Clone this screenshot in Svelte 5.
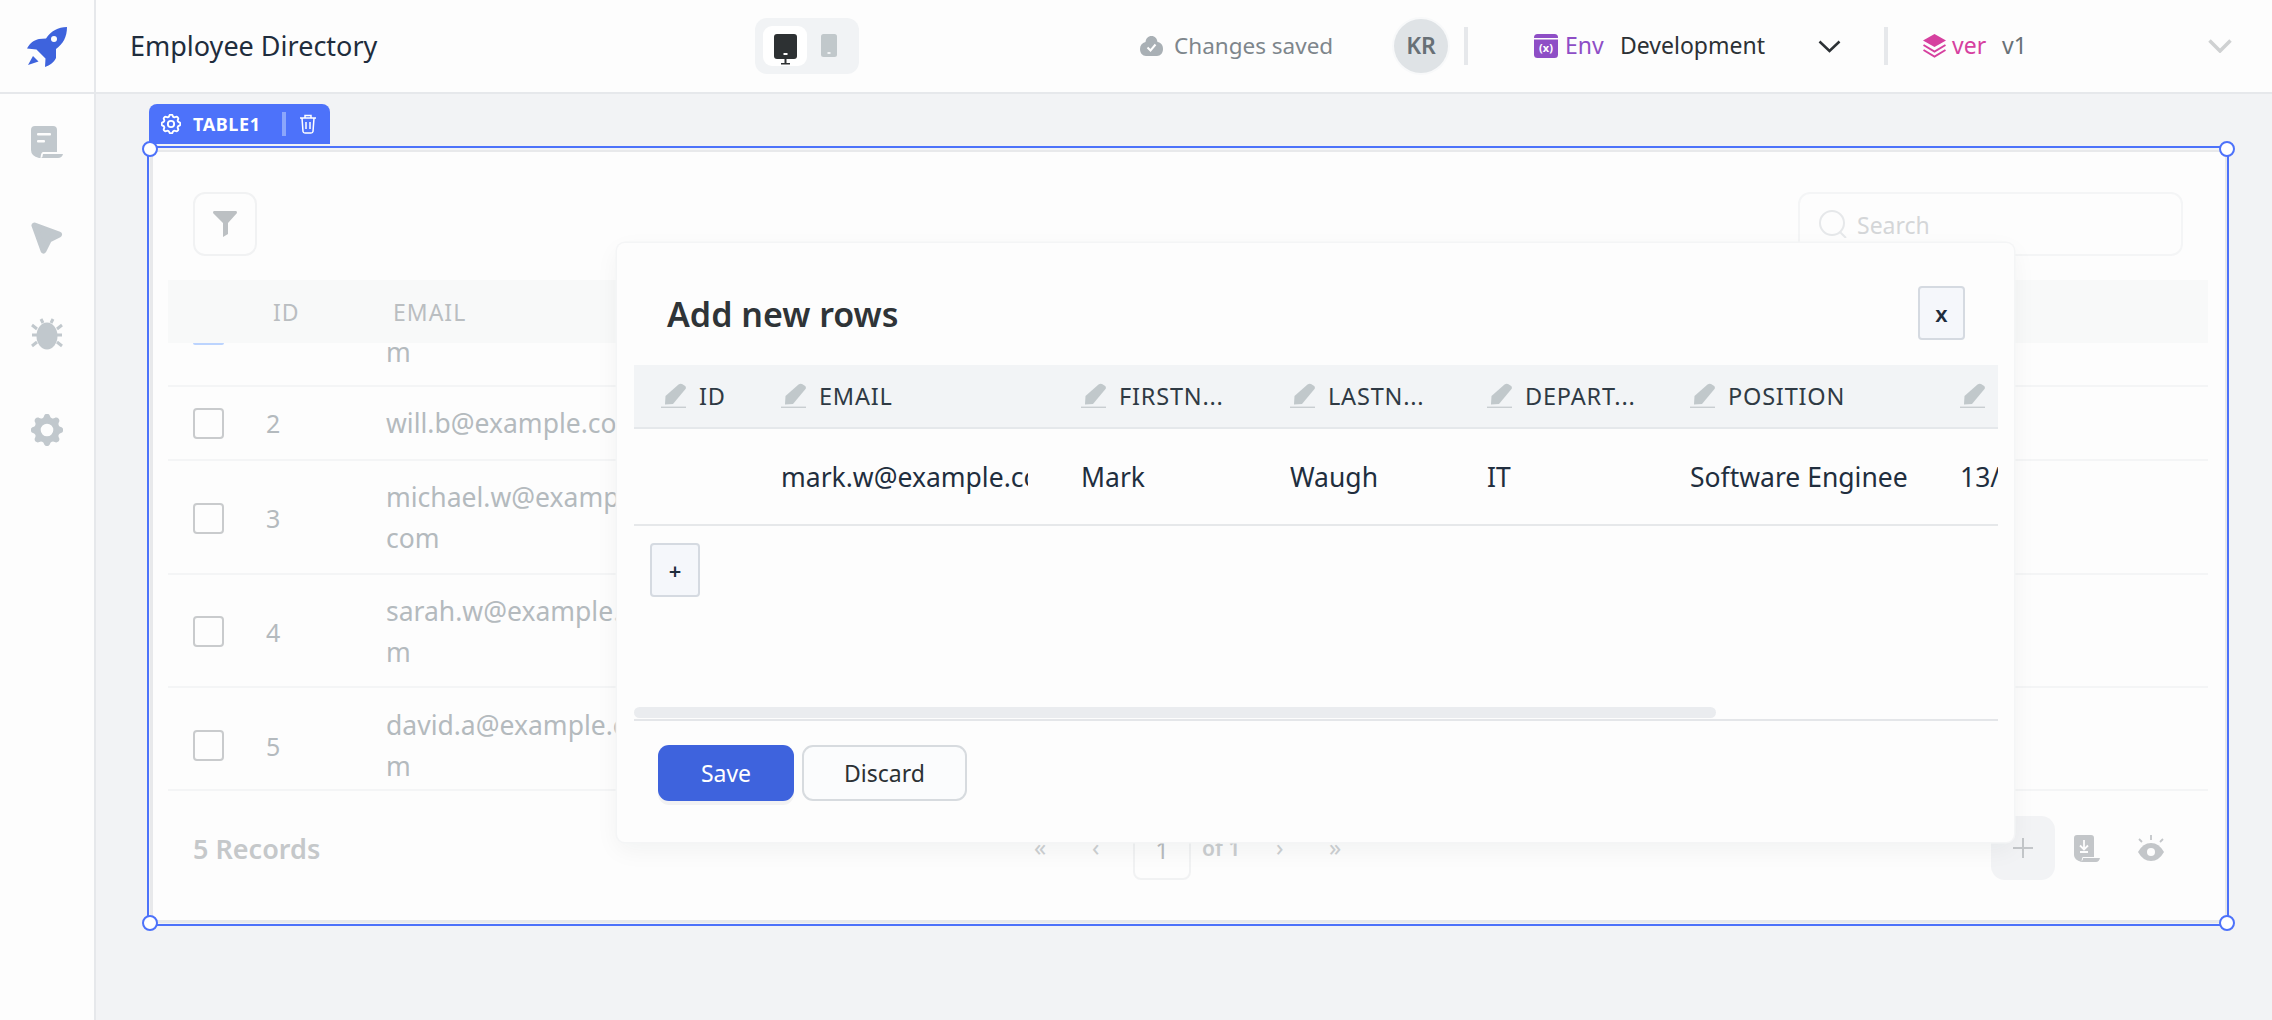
<script>
  const gear = "M10.325 4.317c.426-1.756 2.924-1.756 3.35 0a1.724 1.724 0 0 0 2.573 1.066c1.543-.94 3.31.826 2.37 2.37a1.724 1.724 0 0 0 1.065 2.572c1.756.426 1.756 2.924 0 3.35a1.724 1.724 0 0 0-1.066 2.573c.94 1.543-.826 3.31-2.37 2.37a1.724 1.724 0 0 0-2.572 1.065c-.426 1.756-2.924 1.756-3.35 0a1.724 1.724 0 0 0-2.573-1.066c-1.543.94-3.31-.826-2.37-2.37a1.724 1.724 0 0 0-1.065-2.572c-1.756-.426-1.756-2.924 0-3.35a1.724 1.724 0 0 0 1.066-2.573c-.94-1.543.826-3.31 2.37-2.37c1 .608 2.296.07 2.572-1.065z"

  const rows = [
    { id: '', email: 'm', h: 42, pad: 0, partial: true },
    { id: 2, email: 'will.b@example.com', h: 72, pad: 0 },
    { id: 3, email: 'michael.w@example.\ncom', h: 110, pad: 2 },
    { id: 4, email: 'sarah.w@example.co\nm', h: 109, pad: 2 },
    { id: 5, email: 'david.a@example.co\nm', h: 87, pad: 14 }
  ]

  const columns = [
    { name: 'ID', value: '', width: 120 },
    { name: 'EMAIL', value: 'mark.w@example.com', width: 300 },
    { name: 'FIRSTN...', value: 'Mark', width: 209 },
    { name: 'LASTN...', value: 'Waugh', width: 197 },
    { name: 'DEPART...', value: 'IT', width: 203 },
    { name: 'POSITION', value: 'Software Engineer', width: 270 },
    { name: '', value: '13/04/2023', width: 170 }
  ]
</script>

{#snippet pencil()}
  <svg class="pencil" viewBox="0 0 25 25" aria-hidden="true">
    <path d="M17.5 1.6q2-1.6 4-.4l2.3 1.6q1.8 1.3.7 3.2L12 21l-8 .5.5-8.5z" fill="#c1c8cb" />
    <rect x="0" y="23.6" width="25" height="1.6" fill="#c9ced1" />
  </svg>
{/snippet}

<div class="page">
  <header class="top">
    <div class="logo">
      <svg width="40" height="40" viewBox="27 27 40 40" aria-hidden="true">
        <path d="M67 27C58 27 51 31 46 38.500L39 39C34 40 30 43 27 48.500L36.500 49.500L45.500 58.500L45 67C50 65.500 54 62 56 58L56 49C63 44 67 37 67 27z" fill="#3e63dd" />
        <circle cx="54" cy="39" r="3" fill="#fdfdfd" />
        <path d="M28 65L33 56L38.500 61.500z" fill="#3e63dd" />
      </svg>
    </div>
    <div class="title">Employee Directory</div>
    <div class="devices">
      <div class="device active">
        <svg width="23" height="32" viewBox="0 0 23 32" aria-hidden="true">
          <rect x="0" y="0" width="23" height="25" rx="3" fill="#2d3133" />
          <rect x="9.500" y="19" width="4" height="2" fill="#fff" />
          <rect x="10.500" y="25" width="2" height="5" fill="#2d3133" />
          <rect x="7" y="29" width="9" height="1.500" fill="#2d3133" />
        </svg>
      </div>
      <div class="device">
        <svg width="16" height="24" viewBox="0 0 16 24" aria-hidden="true">
          <rect width="16" height="23" rx="2.500" fill="#c1c8cb" />
          <rect x="6.500" y="18" width="3" height="2" fill="#f1f3f5" />
        </svg>
      </div>
    </div>
    <div class="saved">
      <svg width="23" height="20" viewBox="0 0 23 20" aria-hidden="true">
        <path d="M11.500 0C15 0 17 2.500 17.500 6C21 6.500 23 9 23 13C23 17 20.500 20 17 20H6C2.500 20 0 17 0 13C0 9.500 2 7 5.500 6C6 2.500 8 0 11.500 0z" fill="#a9b0b5" />
        <path d="M7.500 11.500L10.500 14.500L15.500 8.500" fill="none" stroke="#fff" stroke-width="2" />
      </svg>
      <span>Changes saved</span>
    </div>
    <div class="avatar">KR</div>
    <div class="sep first"></div>
    <svg class="env-icon" width="24" height="24" viewBox="0 0 24 24" aria-hidden="true">
      <rect width="24" height="24" rx="3.500" fill="#8e4ec6" />
      <rect y="4" width="24" height="1.500" fill="#fdfdfd" />
      <text x="12" y="18" text-anchor="middle" font-size="11" font-weight="700" font-family="Noto Sans, sans-serif" fill="#fff">(x)</text>
    </svg>
    <span class="env">Env</span>
    <span class="env-value">Development</span>
    <svg class="chev" width="23" height="13" viewBox="0 0 23 13" aria-hidden="true">
      <path d="M1.500 1.500L11.500 11L21.500 1.500" fill="none" stroke="#2c3135" stroke-width="2.500" />
    </svg>
    <div class="sep second"></div>
    <svg class="ver-icon" width="23" height="24" viewBox="0 0 23 24" aria-hidden="true">
      <path d="M11.500 0L23 6.500L11.500 13L0 6.500z" fill="#d6409f" />
      <path d="M0.500 11L11.500 17.500L22.500 11M0.500 16L11.500 22.500L22.500 16" fill="none" stroke="#d6409f" stroke-width="2" />
    </svg>
    <span class="ver">ver</span>
    <span class="ver-value">v1</span>
    <svg class="chev-muted" width="24" height="14" viewBox="0 0 24 14" aria-hidden="true">
      <path d="M1.500 1.500L12 12L22.500 1.500" fill="none" stroke="#cfd1d2" stroke-width="3.500" />
    </svg>
  </header>

  <div class="body">
    <nav class="side">
      <svg width="32" height="32" viewBox="0 0 32 32" aria-hidden="true">
        <path d="M4 0H22Q26 0 26 4V26H12Q10 26 9.500 32H8Q0 30 0 24V4Q0 0 4 0z" fill="#c1c8cd" />
        <path d="M12 28H32Q31 32 27 32H10Q12 31 12 28z" fill="#c1c8cd" />
        <rect x="6" y="7" width="14" height="2.500" rx="1" fill="#fdfdfd" />
        <rect x="6" y="14" width="8" height="2.500" rx="1" fill="#fdfdfd" />
      </svg>
      <svg width="32" height="32" viewBox="0 0 32 32" aria-hidden="true">
        <path d="M3.500 3.500L28 12.500L18 17.500L12.500 28.500z" fill="#c1c8cd" stroke="#c1c8cd" stroke-width="6" stroke-linejoin="round" />
      </svg>
      <svg width="32" height="32" viewBox="0 0 32 32" aria-hidden="true">
        <ellipse cx="16" cy="18" rx="10.500" ry="13.500" fill="#c1c8cd" />
        <path d="M10 1L12 5M22 1L20 5M1 7L6 11M31 7L26 11M1 17H6M31 17H26M1 28L6 24M31 28L26 24" stroke="#c1c8cd" stroke-width="3" />
      </svg>
      <svg width="32" height="32" viewBox="2.500 2.500 19 19" aria-hidden="true">
        <path d={gear + "M12 8.500a3.500 3.500 0 1 0 0 7a3.500 3.500 0 0 0 0-7z"} fill="#c1c8cd" fill-rule="evenodd" transform="translate(12 12) scale(1.070) translate(-12 -12)" />
      </svg>
    </nav>

    <main class="canvas">
      <div class="tab">
        <svg width="20" height="20" viewBox="2.500 2.500 19 19" aria-hidden="true">
          <path d={gear} fill="none" stroke="#fff" stroke-width="1.800" />
          <circle cx="12" cy="12" r="3" fill="none" stroke="#fff" stroke-width="1.800" />
        </svg>
        <span class="tab-name">TABLE1</span>
        <span class="tab-sep"></span>
        <svg width="18" height="20" viewBox="0 0 18 20" aria-hidden="true">
          <path d="M1 4H17M3 4L4 17.500Q4.200 19 6 19H12Q13.800 19 14 17.500L15 4M6 4V1.500H12V4M7 8V15M11 8V15" fill="none" stroke="#fff" stroke-width="1.500" />
        </svg>
      </div>

      <div class="widget">
        <span class="handle h-tl"></span>
        <span class="handle h-tr"></span>
        <span class="handle h-bl"></span>
        <span class="handle h-br"></span>
        <div class="card">
          <div class="toolbar">
            <div class="filter">
              <svg width="24" height="26" viewBox="0 0 24 26" aria-hidden="true">
                <path d="M1 0H23Q24 0 24 2L15 12V23L10 26V12L0 2Q0 0 1 0z" fill="#bcc0c3" />
              </svg>
            </div>
            <div class="search">
              <svg width="28" height="28" viewBox="0 0 28 28" aria-hidden="true">
                <circle cx="13" cy="13" r="12" fill="none" stroke="#e6e8ea" stroke-width="2" />
                <path d="M21 22L27 28" stroke="#e6e8ea" stroke-width="2" />
              </svg>
              <span>Search</span>
            </div>
          </div>

          <div class="table">
            <div class="thead">
              <span class="th-id">ID</span>
              <span class="th-email">EMAIL</span>
            </div>
            {#each rows as r}
              <div class="row" style="height: {r.h}px; padding-top: {r.pad}px">
                {#if r.partial}
                  <span class="sliver"></span>
                  <span class="email partial">{r.email}</span>
                {:else}
                  <span class="check"></span>
                  <span class="num">{r.id}</span>
                  <span class="email">{r.email}</span>
                {/if}
              </div>
            {/each}
          </div>

          <div class="foot">
            <span class="records">5 Records</span>
            <div class="pager">
              <span class="pg first-pg">«</span>
              <span class="pg prev-pg">‹</span>
              <span class="pg-box">1</span>
              <span class="pg-of">of 1</span>
              <span class="pg next-pg">›</span>
              <span class="pg last-pg">»</span>
            </div>
            <div class="add">
              <svg width="20" height="20" viewBox="0 0 20 20" aria-hidden="true">
                <path d="M10 0V20M0 10H20" stroke="#c3c6c9" stroke-width="2" />
              </svg>
            </div>
            <svg class="dl" width="26" height="27" viewBox="0 0 26 27" aria-hidden="true">
              <path d="M3 0H17Q20 0 20 3V22H9Q8 22 7.500 27Q0 25 0 20V3Q0 0 3 0z" fill="#c3c6c9" />
              <path d="M9 23H26Q25 27 22 27H6Q9 26 9 23z" fill="#c3c6c9" />
              <path d="M10 5V14M6 10.500L10 14.500L14 10.500M6 17H14" fill="none" stroke="#fdfdfd" stroke-width="1.800" />
            </svg>
            <svg class="eye" width="26" height="26" viewBox="0 0 26 26" aria-hidden="true">
              <path d="M0 17Q5 8 13 8Q21 8 26 17Q21 26 13 26Q5 26 0 17z" fill="#c3c6c9" />
              <circle cx="13" cy="17" r="4" fill="#fdfdfd" />
              <path d="M13 0V5M1 4L4 7M25 4L22 7" stroke="#c3c6c9" stroke-width="1.800" />
            </svg>
          </div>
        </div>
      </div>

      <section class="modal">
        <div class="modal-head">
          <h2>Add new rows</h2>
          <button class="close">x</button>
        </div>
        <div class="sheet">
          <div class="sheet-row sheet-head">
            {#each columns as c}
              <div class="cell" style="width: {c.width}px">
                {@render pencil()}
                {#if c.name}<span>{c.name}</span>{/if}
              </div>
            {/each}
          </div>
          <div class="sheet-row sheet-body">
            {#each columns as c}
              <div class="cell" style="width: {c.width}px"><span class="clip">{c.value}</span></div>
            {/each}
          </div>
          <button class="plus">+</button>
          <div class="scroll"><div class="thumb"></div></div>
        </div>
        <div class="modal-foot">
          <button class="save">Save</button>
          <button class="discard">Discard</button>
        </div>
      </section>
    </main>
  </div>
</div>

<style>
  :global(body) {
    margin: 0;
    background: #f2f3f5;
    font-family: "Noto Sans", sans-serif;
  }

  .page {
    width: 2272px;
    height: 1020px;
    overflow: hidden;
  }

  /* top bar */
  .top {
    display: flex;
    align-items: center;
    height: 94px;
    box-sizing: border-box;
    background: #fdfdfd;
    border-bottom: 2px solid #e6e8eb;
  }
  .logo {
    width: 96px;
    height: 92px;
    box-sizing: border-box;
    border-right: 2px solid #e6e8eb;
    padding: 27px 0 0 27px;
    flex-shrink: 0;
  }
  .title {
    width: 625px;
    margin: -2px 0 0 34px;
    font-size: 27px;
    color: #1f2d3d;
    white-space: nowrap;
  }
  .devices {
    display: flex;
    align-items: center;
    width: 104px;
    height: 56px;
    box-sizing: border-box;
    padding-left: 8px;
    background: #f1f3f5;
    border-radius: 12px;
  }
  .device {
    display: flex;
    align-items: center;
    justify-content: center;
    width: 32px;
    height: 40px;
    margin-right: 6px;
    border-radius: 9px;
  }
  .device.active {
    width: 44px;
    background: #fff;
  }
  .device.active svg { margin-top: 8px; }
  .saved {
    display: flex;
    align-items: center;
    gap: 11px;
    width: 254px;
    margin-left: 281px;
    font-size: 22.500px;
    color: #7e868c;
    white-space: nowrap;
  }
  .saved span,
  .env,
  .env-value,
  .ver,
  .ver-value {
    margin-top: -2px;
  }
  .avatar {
    width: 54px;
    height: 54px;
    line-height: 52px;
    text-align: center;
    border-radius: 50%;
    background: #dfe3e6;
    color: #687076;
    font-size: 23px;
    font-weight: 600;
    box-shadow: 0 0 0 2px #f8f9fa;
  }
  .sep {
    width: 4px;
    height: 38px;
    background: #e6e8eb;
  }
  .sep.first { margin: 0 66px 0 16px; }
  .sep.second { margin: 0 35px 0 43px; }
  .env-icon { flex-shrink: 0; }
  .env {
    width: 55px;
    margin-left: 7px;
    font-size: 23px;
    color: #8e4ec6;
  }
  .env-value {
    width: 198px;
    font-size: 23px;
    color: #2c3135;
  }
  .ver-icon { flex-shrink: 0; }
  .ver {
    width: 50px;
    margin-left: 6px;
    font-size: 23px;
    color: #d6409f;
  }
  .ver-value {
    width: 206px;
    font-size: 23px;
    color: #687076;
  }

  /* body */
  .body {
    display: flex;
    height: 926px;
  }
  .side {
    display: flex;
    flex-direction: column;
    gap: 64px;
    width: 96px;
    box-sizing: border-box;
    padding: 32px 0 0 31px;
    background: #fdfdfd;
    border-right: 2px solid #e6e8eb;
    flex-shrink: 0;
  }
  .canvas {
    position: relative;
    flex: 1;
    background: #f2f3f5;
  }

  /* selected widget on the canvas */
  .tab {
    position: absolute;
    left: 53px;
    top: 10px;
    display: flex;
    align-items: center;
    width: 181px;
    height: 40px;
    box-sizing: border-box;
    padding-left: 12px;
    background: #4d72fa;
    border-radius: 8px 8px 0 0;
    color: #fff;
  }
  .tab-name {
    width: 89px;
    margin-left: 12px;
    font-size: 18px;
    font-weight: 700;
    letter-spacing: 0.6px;
  }
  .tab-sep {
    width: 4px;
    height: 24px;
    margin-right: 13px;
    background: #8ba6fb;
  }
  .widget {
    position: absolute;
    left: 51px;
    top: 52px;
    width: 2082px;
    height: 780px;
    box-sizing: border-box;
    border: 2px solid #4d72fa;
    padding: 2px 0 1px 1px;
  }
  .handle {
    position: absolute;
    width: 12px;
    height: 12px;
    border: 2.500px solid #4d72fa;
    border-radius: 50%;
    background: #fff;
    z-index: 2;
  }
  .h-tl { left: -7px; top: -7px; }
  .h-tr { right: -8px; top: -7px; }
  .h-bl { left: -7px; bottom: -7px; }
  .h-br { right: -8px; bottom: -7px; }
  .card {
    height: 100%;
    box-sizing: border-box;
    background: #fdfdfd;
    border: 2px solid #e8e9eb;
    border-width: 2px 2px 3px 3px;
  }
  .toolbar {
    display: flex;
    justify-content: space-between;
    padding: 40px 42px 0 40px;
  }
  .filter {
    display: flex;
    align-items: center;
    justify-content: center;
    width: 64px;
    height: 64px;
    box-sizing: border-box;
    border: 2px solid #f1f2f3;
    border-radius: 12px;
  }
  .search {
    display: flex;
    align-items: center;
    gap: 10px;
    width: 385px;
    height: 64px;
    box-sizing: border-box;
    padding: 0 0 0 19px;
    border: 2px solid #f4f5f6;
    border-radius: 12px;
    font-size: 23px;
    color: #d4d6d8;
  }
  .search span { margin-top: 2px; }
  .table {
    margin: 24px 17px 0 15px;
  }
  .thead {
    display: flex;
    align-items: center;
    height: 63px;
    background: #f8f9f9;
    color: #babec1;
    font-size: 23px;
    letter-spacing: 1px;
  }
  .th-id { margin-left: 105px; width: 120px; }
  .row {
    position: relative;
    display: flex;
    align-items: center;
    border-bottom: 2px solid #f4f5f6;
    overflow: hidden;
  }
  .sliver {
    position: absolute;
    left: 25px;
    top: 0;
    width: 31px;
    height: 2px;
    background: #bcd4fe;
    border-radius: 0 0 3px 3px;
  }
  .check {
    width: 31px;
    height: 31px;
    box-sizing: border-box;
    margin-left: 25px;
    border: 2px solid #c9cbcd;
    border-radius: 4px;
  }
  .num {
    width: 120px;
    margin-left: 42px;
    font-size: 25px;
    color: #b4babe;
  }
  .email {
    white-space: pre-line;
    font-size: 26.500px;
    line-height: 41px;
    color: #b4babe;
  }
  .email.partial {
    position: absolute;
    left: 218px;
    top: -11px;
  }
  .foot {
    display: flex;
    align-items: flex-start;
    padding: 25px 0 0 40px;
  }
  .records {
    width: 841px;
    margin-top: 14px;
    font-size: 27px;
    font-weight: 600;
    color: #c5c8ca;
  }
  .pager {
    display: flex;
    align-items: flex-start;
    width: 957px;
    height: 64px;
    color: #cdd0d2;
  }
  .pg {
    margin-top: 16px;
    font-size: 24px;
    line-height: 30px;
  }
  .first-pg { width: 58px; }
  .prev-pg { width: 41px; }
  .pg-box {
    width: 58px;
    height: 64px;
    line-height: 64px;
    box-sizing: border-box;
    border: 2px solid #f1f2f3;
    border-radius: 8px;
    text-align: center;
    color: #b8bbbe;
    font-size: 24px;
  }
  .pg-of {
    width: 74px;
    margin: 18px 0 0 11px;
    font-size: 21px;
    font-weight: 600;
    color: #cbced0;
  }
  .next-pg { width: 53px; }
  .add {
    display: flex;
    align-items: center;
    justify-content: center;
    width: 64px;
    height: 64px;
    background: #f2f3f5;
    border-radius: 14px;
    flex-shrink: 0;
  }
  .dl { margin: 19px 0 0 19px; flex-shrink: 0; }
  .eye { margin: 19px 0 0 38px; flex-shrink: 0; }

  /* modal */
  .modal {
    position: absolute;
    left: 521px;
    top: 149px;
    width: 1397px;
    height: 599px;
    box-sizing: border-box;
    background: #fdfdfd;
    border-radius: 8px;
    box-shadow: 0 0 0 1.500px #f4f5f6, 0 8px 24px rgba(20, 30, 40, 0.05);
    z-index: 3;
  }
  .modal-head {
    display: flex;
    justify-content: space-between;
    padding: 43px 49px 0 50px;
  }
  h2 {
    margin: 8px 0 0;
    font-size: 34px;
    font-weight: 600;
    color: #2f3437;
    line-height: 40px;
  }
  button {
    font-family: inherit;
    cursor: pointer;
  }
  .close {
    width: 47px;
    height: 54px;
    padding: 0;
    border: 2px solid #d5dae1;
    border-radius: 4px;
    background: #f5f7fb;
    font-size: 22px;
    font-weight: 600;
    color: #1f2d3d;
  }
  .sheet {
    margin: 25px 16px 0 17px;
  }
  .sheet-row {
    display: flex;
    overflow: hidden;
  }
  .sheet-head {
    height: 62px;
    background: #f2f4f6;
    border-bottom: 2px solid #e5e8eb;
    font-size: 23.500px;
    letter-spacing: 0.8px;
    color: #2f3a44;
  }
  .sheet-body {
    height: 95px;
    border-bottom: 2px solid #e6e8ea;
    font-size: 26.500px;
    color: #212e3e;
  }
  .cell {
    display: flex;
    align-items: center;
    flex-shrink: 0;
    box-sizing: border-box;
    padding: 0 26px 0 27px;
    gap: 13px;
    white-space: nowrap;
  }
  .pencil {
    width: 25px;
    height: 25px;
    flex-shrink: 0;
    margin-top: -1px;
  }
  .clip {
    display: block;
    overflow: hidden;
  }
  .plus {
    display: block;
    width: 50px;
    height: 54px;
    margin: 17px 0 0 16px;
    padding: 0;
    border: 2px solid #d5dae1;
    border-radius: 4px;
    background: #f5f7fb;
    font-size: 22px;
    font-weight: 600;
    color: #1f2d3d;
  }
  .scroll {
    height: 12px;
    margin-top: 110px;
    border-bottom: 2px solid #e4e6e9;
  }
  .thumb {
    width: 1082px;
    height: 11px;
    background: #eaecef;
    border-radius: 6px;
  }
  .modal-foot {
    display: flex;
    gap: 8px;
    padding: 24px 0 0 41px;
  }
  .save {
    width: 136px;
    height: 56px;
    border: 0;
    border-radius: 11px;
    background: #3e63dd;
    box-shadow: 0 4px 0 #f2f2f3;
    color: #fff;
    font-size: 23px;
  }
  .discard {
    width: 165px;
    height: 56px;
    border: 2.500px solid #d7dbdf;
    border-radius: 11px;
    background: #fbfcfd;
    color: #2c3135;
    font-size: 23px;
  }
</style>
